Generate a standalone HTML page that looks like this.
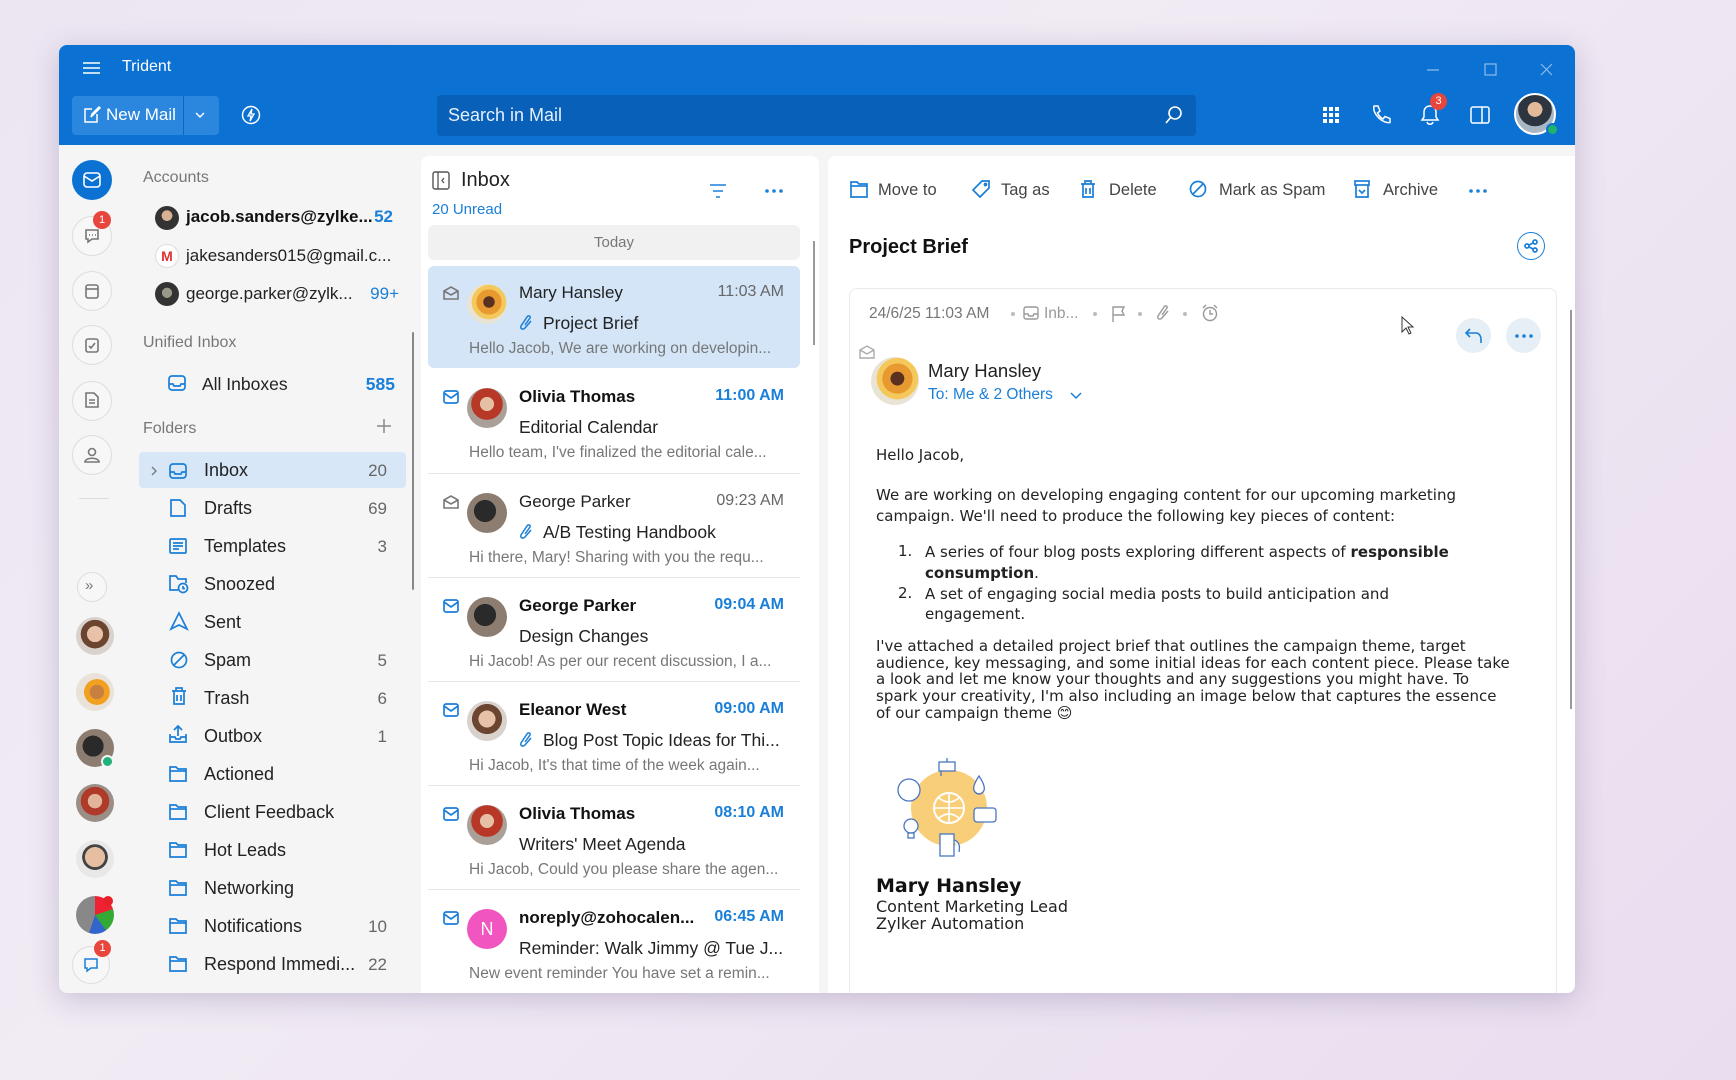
<!DOCTYPE html>
<html><head><meta charset="utf-8"><style>
*{box-sizing:border-box;margin:0;padding:0}
body{width:1736px;height:1080px;overflow:hidden;background:linear-gradient(135deg,#ece6f3 0%,#f1ebf4 40%,#e9ddef 100%);font-family:"Liberation Sans",sans-serif;position:relative}
.a{position:absolute}
.win{left:59px;top:45px;width:1516px;height:948px;background:#f5f5f5;border-radius:8px;overflow:hidden;box-shadow:0 6px 30px rgba(80,60,120,.25)}
.hdr{left:0;top:0;width:1516px;height:100px;background:#0b72d3}
.t{position:absolute;white-space:nowrap}
svg{position:absolute;overflow:visible}
.rail{fill:none;stroke:#777;stroke-width:1.6}
.circ{position:absolute;border-radius:50%;border:1.5px solid #ddd;background:#f7f7f7;width:40px;height:40px}
.fi{fill:none;stroke:#1a7fd8;stroke-width:1.7}
.fold{font-size:18px;color:#222}
.cnt{font-size:17px;color:#666;text-align:right;width:40px}
.av{position:absolute;border-radius:50%;overflow:hidden}
.item .nm{font-size:17px;color:#222}
.msg{font-size:15.5px;color:#777}
.body{font-family:"DejaVu Sans",sans-serif;font-size:15px;color:#222}
</style></head><body>
<div class="a win">
 <div class="a hdr"></div>
 <svg style="left:23px;top:16px" width="20" height="14"><path d="M1 2H18M1 7H18M1 12H18" stroke="#fff" stroke-width="1.6"/></svg>
 <div class="t" style="left:63px;top:13px;color:#fff;font-size:16px">Trident</div>
 <svg style="left:1368px;top:18px" width="180" height="14"><path d="M0 7H12" stroke="#8fbbe8" stroke-width="1.2"/><rect x="58" y="1" width="11" height="11" fill="none" stroke="#8fbbe8" stroke-width="1.2"/><path d="M114 1L125 12M125 1L114 12" stroke="#8fbbe8" stroke-width="1.2"/></svg>
 <div class="a" style="left:13px;top:51px;width:147px;height:39px;background:#2a87dd;border-radius:4px"></div>
 <div class="a" style="left:124px;top:51px;width:1px;height:39px;background:#0b68c2"></div>
 <svg style="left:24px;top:61px" width="18" height="18"><path d="M14 8V16H2V3H9M8 11L9 8 16 1 17 2 10 9Z" fill="none" stroke="#fff" stroke-width="1.5"/></svg>
 <div class="t" style="left:47px;top:60px;color:#fff;font-size:17px">New Mail</div>
 <svg style="left:136px;top:67px" width="10" height="6"><path d="M1 1L5 5 9 1" fill="none" stroke="#fff" stroke-width="1.4"/></svg>
 <svg style="left:182px;top:60px" width="20" height="20"><circle cx="10" cy="10" r="8.5" fill="none" stroke="#fff" stroke-width="1.5"/><path d="M11 4L7 11H10L9 16 13 9H10Z" fill="none" stroke="#fff" stroke-width="1.3"/></svg>
 <div class="a" style="left:378px;top:50px;width:759px;height:41px;background:#0860b8;border-radius:4px"></div>
 <div class="t" style="left:389px;top:60px;color:#e6f0fb;font-size:18px">Search in Mail</div>
 <svg style="left:1106px;top:61px" width="18" height="18"><circle cx="10" cy="7" r="6" fill="none" stroke="#fff" stroke-width="1.6"/><path d="M6 11L1 17" stroke="#fff" stroke-width="1.6"/></svg>
 <svg style="left:1264px;top:62px" width="16" height="16" fill="#fff"><rect x="0" y="0" width="4" height="4"/><rect x="6" y="0" width="4" height="4"/><rect x="12" y="0" width="4" height="4"/><rect x="0" y="6" width="4" height="4"/><rect x="6" y="6" width="4" height="4"/><rect x="12" y="6" width="4" height="4"/><rect x="0" y="12" width="4" height="4"/><rect x="6" y="12" width="4" height="4"/><rect x="12" y="12" width="4" height="4"/></svg>
 <svg style="left:1312px;top:60px" width="20" height="20"><path d="M3 1L7 1 9 6 6.5 8C8 11 9.5 12.5 12 14L14 11.5 19 13.5V17.5C12 19 1 9 3 1Z" fill="none" stroke="#fff" stroke-width="1.5"/></svg>
 <svg style="left:1361px;top:59px" width="20" height="22"><path d="M10 2C6 2 4 5 4 8V13L2 16H18L16 13V8C16 5 14 2 10 2ZM7 18C8 21 12 21 13 18" fill="none" stroke="#fff" stroke-width="1.5"/></svg>
 <div class="a" style="left:1371px;top:48px;width:17px;height:17px;border-radius:50%;background:#e8453c;color:#fff;font-size:11px;text-align:center;line-height:17px">3</div>
 <svg style="left:1411px;top:61px" width="20" height="18"><rect x="1" y="1" width="18" height="16" rx="2" fill="none" stroke="#fff" stroke-width="1.5"/><path d="M12 1V17" stroke="#fff" stroke-width="1.5"/></svg>
 <div class="av" style="left:1455px;top:48px;width:42px;height:42px;background:radial-gradient(circle at 50% 38%,#e3b99a 0 24%,#2d3540 25% 55%,#a9b6c4 56%);border:2px solid #fff"></div>
 <div class="a" style="left:1487px;top:78px;width:13px;height:13px;border-radius:50%;background:#21b26b;border:2px solid #0b72d3"></div>

 <div class="a" style="left:13px;top:115px;width:40px;height:40px;border-radius:50%;background:#0b72d3"></div>
 <svg style="left:24px;top:127px" width="18" height="16"><rect x="1" y="1" width="16" height="14" rx="3" fill="none" stroke="#fff" stroke-width="1.6"/><path d="M1 4L9 9 17 4" fill="none" stroke="#fff" stroke-width="1.6"/></svg>
 <div class="circ" style="left:13px;top:171px"></div><svg style="left:25px;top:183px" width="16" height="16" class="rail"><path d="M2 2H14V11H8L4 14V11H2Z"/><path d="M5 7H6M8 7H9M11 7H12"/></svg>
 <div class="a" style="left:34px;top:166px;width:18px;height:18px;border-radius:50%;background:#e8453c;color:#fff;font-size:11px;text-align:center;line-height:18px">1</div>
 <div class="circ" style="left:13px;top:226px"></div><svg style="left:25px;top:238px" width="16" height="16" class="rail"><rect x="2" y="2" width="12" height="13" rx="2"/><path d="M2 6H14"/></svg>
 <div class="circ" style="left:13px;top:280px"></div><svg style="left:26px;top:292px" width="14" height="16" class="rail"><rect x="1" y="2" width="12" height="13" rx="2"/><path d="M4 9L6 11 10 6"/></svg>
 <div class="circ" style="left:13px;top:336px"></div><svg style="left:26px;top:347px" width="14" height="16" class="rail"><path d="M1 1H9L13 5V15H1Z"/><path d="M4 8H10M4 11H10"/></svg>
 <div class="circ" style="left:13px;top:390px"></div><svg style="left:25px;top:402px" width="16" height="16" class="rail"><circle cx="8" cy="5" r="3.5"/><path d="M1 15C1 10 15 10 15 15Z"/></svg>
 <div class="a" style="left:20px;top:453px;width:30px;height:1px;background:#ddd"></div>
 <div class="circ" style="left:18px;top:527px;width:30px;height:30px"></div><div class="t" style="left:26px;top:532px;color:#777;font-size:15px">»</div>
 <div class="av" style="left:17px;top:572px;width:38px;height:38px;background:radial-gradient(circle at 50% 45%,#e8c2a8 0 28%,#6b4530 29% 50%,#d9d2cc 51%)"></div>
 <div class="av" style="left:17px;top:628px;width:38px;height:38px;background:radial-gradient(circle at 55% 50%,#c88040 0 25%,#f2a020 26% 45%,#e8e2d8 46%)"></div>
 <div class="av" style="left:17px;top:684px;width:38px;height:38px;background:radial-gradient(circle at 45% 45%,#2a2a2a 0 35%,#8c7d70 36%)"></div>
 <div class="a" style="left:42px;top:710px;width:13px;height:13px;border-radius:50%;background:#1fb27a;border:2px solid #f5f5f5"></div>
 <div class="av" style="left:17px;top:739px;width:38px;height:38px;background:radial-gradient(circle at 50% 45%,#e2b49a 0 25%,#b03a2a 26% 50%,#9a8e86 51%)"></div>
 <div class="av" style="left:17px;top:795px;width:38px;height:38px;background:radial-gradient(circle at 50% 45%,#e6bfa2 0 35%,#444 36% 45%,#e8e8e8 46%)"></div>
 <div class="av" style="left:17px;top:851px;width:38px;height:38px;background:conic-gradient(#e23 0 20%,#3a3 20% 40%,#36c 40% 55%,#888 55%)"></div>
 <div class="a" style="left:44px;top:851px;width:10px;height:10px;border-radius:50%;background:#e8202a"></div>
 <div class="circ" style="left:13px;top:901px;width:38px;height:38px"></div><svg style="left:24px;top:912px" width="16" height="16"><path d="M2 2H14V11H8L4 14V11H2Z" fill="none" stroke="#1a7fd8" stroke-width="1.5"/></svg>
 <div class="a" style="left:35px;top:895px;width:17px;height:17px;border-radius:50%;background:#e8453c;color:#fff;font-size:11px;text-align:center;line-height:17px">1</div>

 <div class="t" style="left:84px;top:124px;font-size:16px;color:#777">Accounts</div>
 <div class="av" style="left:96px;top:161px;width:24px;height:24px;background:radial-gradient(circle at 50% 40%,#d8b094 0 28%,#333 29%)"></div>
 <div class="t" style="left:127px;top:162px;font-size:17px;color:#111;font-weight:bold">jacob.sanders@zylke...</div>
 <div class="t" style="left:314px;top:162px;font-size:17px;color:#1a7fd8;font-weight:bold;width:20px;text-align:right">52</div>
 <div class="av" style="left:96px;top:199px;width:24px;height:24px;background:#fff;border:1px solid #ddd;color:#d33;font-weight:bold;font-size:14px;text-align:center;line-height:22px">M</div>
 <div class="t" style="left:127px;top:201px;font-size:17px;color:#222">jakesanders015@gmail.c...</div>
 <div class="av" style="left:96px;top:237px;width:24px;height:24px;background:radial-gradient(circle at 50% 45%,#998 0 28%,#333 29%)"></div>
 <div class="t" style="left:127px;top:239px;font-size:17px;color:#222">george.parker@zylk...</div>
 <div class="t" style="left:304px;top:239px;font-size:17px;color:#1a7fd8;width:36px;text-align:right">99+</div>
 <div class="t" style="left:84px;top:289px;font-size:16px;color:#777">Unified Inbox</div>
 <svg style="left:109px;top:330px" width="18" height="16" class="fi"><rect x="1" y="1" width="16" height="14" rx="3"/><path d="M1 9H5L6 11H12L13 9H17"/></svg>
 <div class="t" style="left:143px;top:329px;font-size:17.5px;color:#222">All Inboxes</div>
 <div class="t" style="left:296px;top:329px;font-size:17.5px;color:#1a7fd8;font-weight:bold;width:40px;text-align:right">585</div>
 <div class="t" style="left:84px;top:375px;font-size:16px;color:#777">Folders</div>
 <svg style="left:318px;top:374px" width="14" height="14"><path d="M7 0V14M0 7H14" stroke="#888" stroke-width="1.5"/></svg>
 <div class="a" style="left:80px;top:407px;width:267px;height:36px;background:#d7e7f7;border-radius:4px"></div>
 <svg style="left:92px;top:421px" width="6" height="10"><path d="M1 1L5 5 1 9" fill="none" stroke="#777" stroke-width="1.3"/></svg>
 <svg style="left:110px;top:418px" width="18" height="16" class="fi"><rect x="1" y="1" width="16" height="14" rx="3"/><path d="M1 9H5L6 11H12L13 9H17"/></svg>
 <div class="t fold" style="left:145px;top:415px">Inbox</div><div class="t cnt" style="left:288px;top:416px">20</div>
 <svg style="left:111px;top:454px" width="16" height="18" class="fi"><path d="M1 1H10L15 6V17H1Z"/></svg>
 <div class="t fold" style="left:145px;top:453px">Drafts</div><div class="t cnt" style="left:288px;top:454px">69</div>
 <svg style="left:110px;top:493px" width="18" height="16" class="fi"><rect x="1" y="1" width="16" height="14" rx="1"/><path d="M4 5H14M4 8H14M4 11H10"/></svg>
 <div class="t fold" style="left:145px;top:491px">Templates</div><div class="t cnt" style="left:288px;top:492px">3</div>
 <svg style="left:110px;top:530px" width="20" height="18" class="fi"><path d="M9 15H1V1H7L9 4H17V8"/><circle cx="14" cy="13" r="4.5"/><path d="M14 11V13.5H16"/></svg>
 <div class="t fold" style="left:145px;top:529px">Snoozed</div>
 <svg style="left:111px;top:567px" width="18" height="18" class="fi"><path d="M9 1L17 17 9 13 1 17Z"/></svg>
 <div class="t fold" style="left:145px;top:567px">Sent</div>
 <svg style="left:111px;top:606px" width="18" height="18" class="fi"><circle cx="9" cy="9" r="7.5"/><path d="M4 14L14 4"/></svg>
 <div class="t fold" style="left:145px;top:605px">Spam</div><div class="t cnt" style="left:288px;top:606px">5</div>
 <svg style="left:112px;top:642px" width="16" height="19" class="fi"><path d="M1 4H15M5 4V1H11V4M3 4V17H13V4M6 8V14M10 8V14"/></svg>
 <div class="t fold" style="left:145px;top:643px">Trash</div><div class="t cnt" style="left:288px;top:644px">6</div>
 <svg style="left:110px;top:680px" width="18" height="18" class="fi"><path d="M9 11V1M5 5L9 1 13 5M1 9V17H17V9M1 12H6L7 14H11L12 12H17"/></svg>
 <div class="t fold" style="left:145px;top:681px">Outbox</div><div class="t cnt" style="left:288px;top:682px">1</div>
 <svg style="left:110px;top:721px" width="18" height="16" class="fi"><path d="M1 1H7L9 3H17V15H1Z"/><path d="M1 5H17"/></svg>
 <div class="t fold" style="left:145px;top:719px">Actioned</div>
 <svg style="left:110px;top:759px" width="18" height="16" class="fi"><path d="M1 1H7L9 3H17V15H1Z"/><path d="M1 5H17"/></svg>
 <div class="t fold" style="left:145px;top:757px">Client Feedback</div>
 <svg style="left:110px;top:797px" width="18" height="16" class="fi"><path d="M1 1H7L9 3H17V15H1Z"/><path d="M1 5H17"/></svg>
 <div class="t fold" style="left:145px;top:795px">Hot Leads</div>
 <svg style="left:110px;top:835px" width="18" height="16" class="fi"><path d="M1 1H7L9 3H17V15H1Z"/><path d="M1 5H17"/></svg>
 <div class="t fold" style="left:145px;top:833px">Networking</div>
 <svg style="left:110px;top:873px" width="18" height="16" class="fi"><path d="M1 1H7L9 3H17V15H1Z"/><path d="M1 5H17"/></svg>
 <div class="t fold" style="left:145px;top:871px">Notifications</div><div class="t cnt" style="left:288px;top:872px">10</div>
 <svg style="left:110px;top:911px" width="18" height="16" class="fi"><path d="M1 1H7L9 3H17V15H1Z"/><path d="M1 5H17"/></svg>
 <div class="t fold" style="left:145px;top:909px">Respond Immedi...</div><div class="t cnt" style="left:288px;top:910px">22</div>
 <div class="a" style="left:353px;top:287px;width:2px;height:258px;background:#888;border-radius:1px"></div>

 <div class="a" style="left:362px;top:111px;width:398px;height:850px;background:#fff;border-radius:8px"></div>
 <svg style="left:373px;top:126px" width="18" height="19"><rect x="1" y="1" width="16" height="17" rx="2" fill="none" stroke="#555" stroke-width="1.4"/><path d="M6 1V18M12 7L10 9.5 12 12" fill="none" stroke="#555" stroke-width="1.3"/></svg>
 <div class="t" style="left:402px;top:124px;font-size:20px;color:#222">Inbox</div>
 <div class="t" style="left:373px;top:156px;font-size:15px;color:#1a7fd8">20 Unread</div>
 <svg style="left:650px;top:139px" width="18" height="14"><path d="M1 1H17M4 7H14M7 13H11" stroke="#1a7fd8" stroke-width="1.6"/></svg>
 <svg style="left:706px;top:144px" width="18" height="4" fill="#1a7fd8"><circle cx="2" cy="2" r="1.8"/><circle cx="9" cy="2" r="1.8"/><circle cx="16" cy="2" r="1.8"/></svg>
 <div class="a" style="left:369px;top:180px;width:372px;height:35px;background:#f1f1f1;border-radius:6px"></div>
 <div class="t" style="left:369px;top:189px;width:372px;text-align:center;font-size:15px;color:#777">Today</div>
 <div class="a" style="left:369px;top:221px;width:372px;height:102px;background:#d3e5f7;border-radius:6px"></div>
 <div class="a" style="left:754px;top:196px;width:2px;height:104px;background:#999"></div>

 <div class="a item" style="left:369px;top:221px;width:372px;height:103px">
  <svg style="left:15px;top:20px" width="16" height="14" class="rail" ><path d="M1 5L8 1 15 5V13H1ZM1 5L8 9 15 5"/></svg>
  <div class="av" style="left:39px;top:18px;width:40px;height:40px;background:radial-gradient(circle at 55% 45%,#5a3020 0 18%,#e89a30 19% 40%,#f4c85a 41% 55%,#e9e3d5 56%)"></div>
  <div class="t nm" style="left:91px;top:17px">Mary Hansley</div>
  <div class="t" style="right:16px;top:17px;font-size:16px;color:#666">11:03 AM</div>
  <svg style="left:91px;top:48px" width="14" height="18"><path d="M12 7L6 14C4 16 1 15 2 12L8 3C9 1 12 2 11 4L6 11" fill="none" stroke="#1a7fd8" stroke-width="1.5"/></svg>
  <div class="t" style="left:115px;top:47px;font-size:17.5px;color:#222">Project Brief</div>
  <div class="t msg" style="left:41px;top:74px">Hello Jacob, We are working on developin...</div>
 </div>

 <div class="a item" style="left:369px;top:325px;width:372px;height:104px;border-bottom:1.5px solid #e6e6e6">
  <svg style="left:15px;top:20px" width="16" height="14" class="fi"><rect x="1" y="1" width="14" height="12" rx="2"/><path d="M1 3L8 8 15 3"/></svg>
  <div class="av" style="left:39px;top:18px;width:40px;height:40px;background:radial-gradient(circle at 50% 40%,#e5c0a5 0 22%,#b83828 23% 50%,#aaa098 51%)"></div>
  <div class="t nm" style="left:91px;top:17px;font-weight:bold;color:#111">Olivia Thomas</div>
  <div class="t" style="right:16px;top:17px;font-size:16px;color:#1a7fd8;font-weight:bold">11:00 AM</div>
  <div class="t" style="left:91px;top:47px;font-size:17.5px;color:#222">Editorial Calendar</div>
  <div class="t msg" style="left:41px;top:74px">Hello team, I've finalized the editorial cale...</div>
 </div>

 <div class="a item" style="left:369px;top:430px;width:372px;height:103px;border-bottom:1.5px solid #e6e6e6">
  <svg style="left:15px;top:20px" width="16" height="14" class="rail"><path d="M1 5L8 1 15 5V13H1ZM1 5L8 9 15 5"/></svg>
  <div class="av" style="left:39px;top:18px;width:40px;height:40px;background:radial-gradient(circle at 45% 45%,#2a2a2a 0 35%,#8c7d70 36%)"></div>
  <div class="t nm" style="left:91px;top:17px">George Parker</div>
  <div class="t" style="right:16px;top:17px;font-size:16px;color:#666">09:23 AM</div>
  <svg style="left:91px;top:48px" width="14" height="18"><path d="M12 7L6 14C4 16 1 15 2 12L8 3C9 1 12 2 11 4L6 11" fill="none" stroke="#1a7fd8" stroke-width="1.5"/></svg>
  <div class="t" style="left:115px;top:47px;font-size:17.5px;color:#222">A/B Testing Handbook</div>
  <div class="t msg" style="left:41px;top:74px">Hi there, Mary! Sharing with you the requ...</div>
 </div>

 <div class="a item" style="left:369px;top:534px;width:372px;height:103px;border-bottom:1.5px solid #e6e6e6">
  <svg style="left:15px;top:20px" width="16" height="14" class="fi"><rect x="1" y="1" width="14" height="12" rx="2"/><path d="M1 3L8 8 15 3"/></svg>
  <div class="av" style="left:39px;top:18px;width:40px;height:40px;background:radial-gradient(circle at 45% 45%,#2a2a2a 0 35%,#8c7d70 36%)"></div>
  <div class="t nm" style="left:91px;top:17px;font-weight:bold;color:#111">George Parker</div>
  <div class="t" style="right:16px;top:17px;font-size:16px;color:#1a7fd8;font-weight:bold">09:04 AM</div>
  <div class="t" style="left:91px;top:47px;font-size:17.5px;color:#222">Design Changes</div>
  <div class="t msg" style="left:41px;top:74px">Hi Jacob! As per our recent discussion, I a...</div>
 </div>

 <div class="a item" style="left:369px;top:638px;width:372px;height:103px;border-bottom:1.5px solid #e6e6e6">
  <svg style="left:15px;top:20px" width="16" height="14" class="fi"><rect x="1" y="1" width="14" height="12" rx="2"/><path d="M1 3L8 8 15 3"/></svg>
  <div class="av" style="left:39px;top:18px;width:40px;height:40px;background:radial-gradient(circle at 50% 45%,#e8c2a8 0 28%,#6b4530 29% 50%,#d9d2cc 51%)"></div>
  <div class="t nm" style="left:91px;top:17px;font-weight:bold;color:#111">Eleanor West</div>
  <div class="t" style="right:16px;top:17px;font-size:16px;color:#1a7fd8;font-weight:bold">09:00 AM</div>
  <svg style="left:91px;top:48px" width="14" height="18"><path d="M12 7L6 14C4 16 1 15 2 12L8 3C9 1 12 2 11 4L6 11" fill="none" stroke="#1a7fd8" stroke-width="1.5"/></svg>
  <div class="t" style="left:115px;top:47px;font-size:17.5px;color:#222">Blog Post Topic Ideas for Thi...</div>
  <div class="t msg" style="left:41px;top:74px">Hi Jacob, It's that time of the week again...</div>
 </div>

 <div class="a item" style="left:369px;top:742px;width:372px;height:103px;border-bottom:1.5px solid #e6e6e6">
  <svg style="left:15px;top:20px" width="16" height="14" class="fi"><rect x="1" y="1" width="14" height="12" rx="2"/><path d="M1 3L8 8 15 3"/></svg>
  <div class="av" style="left:39px;top:18px;width:40px;height:40px;background:radial-gradient(circle at 50% 40%,#e5c0a5 0 22%,#b83828 23% 50%,#aaa098 51%)"></div>
  <div class="t nm" style="left:91px;top:17px;font-weight:bold;color:#111">Olivia Thomas</div>
  <div class="t" style="right:16px;top:17px;font-size:16px;color:#1a7fd8;font-weight:bold">08:10 AM</div>
  <div class="t" style="left:91px;top:47px;font-size:17.5px;color:#222">Writers' Meet Agenda</div>
  <div class="t msg" style="left:41px;top:74px">Hi Jacob, Could you please share the agen...</div>
 </div>

 <div class="a item" style="left:369px;top:846px;width:372px;height:103px">
  <svg style="left:15px;top:20px" width="16" height="14" class="fi"><rect x="1" y="1" width="14" height="12" rx="2"/><path d="M1 3L8 8 15 3"/></svg>
  <div class="av" style="left:39px;top:18px;width:40px;height:40px;background:#f055c0;color:#fff;font-size:18px;text-align:center;line-height:40px">N</div>
  <div class="t nm" style="left:91px;top:17px;font-weight:bold;color:#111">noreply@zohocalen...</div>
  <div class="t" style="right:16px;top:17px;font-size:16px;color:#1a7fd8;font-weight:bold">06:45 AM</div>
  <div class="t" style="left:91px;top:47px;font-size:17.5px;color:#222">Reminder: Walk Jimmy @ Tue J...</div>
  <div class="t msg" style="left:41px;top:74px">New event reminder You have set a remin...</div>
 </div>

 <div class="a" style="left:769px;top:111px;width:747px;height:850px;background:#fff;border-radius:8px 0 0 0"></div>
 <svg style="left:791px;top:136px" width="18" height="17" class="fi"><path d="M1 1H7L9 3H17V16H1Z"/><path d="M1 5H17"/></svg>
 <div class="t" style="left:819px;top:136px;font-size:16.5px;color:#444">Move to</div>
 <svg style="left:913px;top:135px" width="18" height="19" class="fi"><path d="M10 1H17V8L8 17 1 10Z"/><circle cx="13.5" cy="4.5" r="1"/></svg>
 <div class="t" style="left:942px;top:136px;font-size:16.5px;color:#444">Tag as</div>
 <svg style="left:1021px;top:135px" width="16" height="19" class="fi"><path d="M1 4H15M5 4V1H11V4M3 4V17H13V4M6 8V14M10 8V14"/></svg>
 <div class="t" style="left:1050px;top:136px;font-size:16.5px;color:#444">Delete</div>
 <svg style="left:1130px;top:135px" width="18" height="18" class="fi"><circle cx="9" cy="9" r="7.5"/><path d="M4 14L14 4"/></svg>
 <div class="t" style="left:1160px;top:136px;font-size:16.5px;color:#444">Mark as Spam</div>
 <svg style="left:1295px;top:135px" width="16" height="19" class="fi"><rect x="1" y="1" width="14" height="4"/><path d="M2 5V17H14V5M5 10L8 13 11 10"/></svg>
 <div class="t" style="left:1324px;top:136px;font-size:16.5px;color:#444">Archive</div>
 <svg style="left:1410px;top:144px" width="18" height="4" fill="#1a7fd8"><circle cx="2" cy="2" r="1.8"/><circle cx="9" cy="2" r="1.8"/><circle cx="16" cy="2" r="1.8"/></svg>
 <div class="t" style="left:790px;top:191px;font-size:20px;font-weight:bold;color:#111">Project Brief</div>
 <div class="a" style="left:1458px;top:187px;width:28px;height:28px;border-radius:50%;border:1.5px solid #1a7fd8"></div>
 <svg style="left:1465px;top:194px" width="14" height="14" class="fi"><circle cx="11" cy="3" r="2"/><circle cx="3" cy="7" r="2"/><circle cx="11" cy="11" r="2"/><path d="M5 6L9 4M5 8L9 10"/></svg>
 <div class="a" style="left:790px;top:243px;width:708px;height:720px;border:1.5px solid #eaeaea;border-radius:8px"></div>
 <div class="t" style="left:810px;top:260px;font-size:15.5px;color:#777">24/6/25 11:03 AM</div>
 <div class="a" style="left:952px;top:267px;width:4px;height:4px;border-radius:50%;background:#bbb"></div>
 <svg style="left:964px;top:261px" width="16" height="14"><rect x="1" y="1" width="14" height="12" rx="2" stroke="#999" fill="none" stroke-width="1.4"/><path d="M1 8H5L6 10H10L11 8H15" stroke="#999" fill="none" stroke-width="1.4"/></svg>
 <div class="t" style="left:985px;top:260px;font-size:15.5px;color:#999">Inb...</div>
 <div class="a" style="left:1034px;top:267px;width:4px;height:4px;border-radius:50%;background:#bbb"></div>
 <svg style="left:1053px;top:261px" width="14" height="16"><path d="M1 16V1H12L10 5 12 9H1" fill="none" stroke="#999" stroke-width="1.4"/></svg>
 <div class="a" style="left:1079px;top:267px;width:4px;height:4px;border-radius:50%;background:#bbb"></div>
 <svg style="left:1097px;top:259px" width="14" height="18"><path d="M12 7L6 14C4 16 1 15 2 12L8 3C9 1 12 2 11 4L6 11" fill="none" stroke="#999" stroke-width="1.4"/></svg>
 <div class="a" style="left:1124px;top:267px;width:4px;height:4px;border-radius:50%;background:#bbb"></div>
 <svg style="left:1142px;top:259px" width="18" height="18"><circle cx="9" cy="10" r="6.5" fill="none" stroke="#999" stroke-width="1.4"/><path d="M9 6V10H12M2 4L5 1M16 4L13 1" fill="none" stroke="#999" stroke-width="1.4"/></svg>
 <svg style="left:1342px;top:271px" width="14" height="20"><path d="M1 1V16L5 12 8 18 10 17 7 11H12Z" fill="#fff" stroke="#333" stroke-width="1"/></svg>
 <div class="a" style="left:1397px;top:273px;width:35px;height:35px;border-radius:50%;background:#e6eef6"></div>
 <svg style="left:1406px;top:283px" width="18" height="16"><path d="M5 1L1 5 5 9M1 5H11C14 5 16 8 16 11V15" fill="none" stroke="#1a7fd8" stroke-width="1.6"/></svg>
 <div class="a" style="left:1447px;top:273px;width:35px;height:35px;border-radius:50%;background:#e6eef6"></div>
 <svg style="left:1456px;top:289px" width="18" height="4" fill="#1a7fd8"><circle cx="2" cy="2" r="1.8"/><circle cx="9" cy="2" r="1.8"/><circle cx="16" cy="2" r="1.8"/></svg>
 <svg style="left:800px;top:300px" width="16" height="14"><path d="M1 5L8 1 15 5V13H1ZM1 5L8 9 15 5" stroke="#aaa" fill="none" stroke-width="1.4"/></svg>
 <div class="av" style="left:812px;top:312px;width:48px;height:48px;background:radial-gradient(circle at 55% 45%,#5a3020 0 18%,#e89a30 19% 40%,#f4c85a 41% 55%,#e9e3d5 56%)"></div>
 <div class="t" style="left:869px;top:315px;font-size:18.5px;color:#222">Mary Hansley</div>
 <div class="t" style="left:869px;top:341px;font-size:15.5px;color:#1a7fd8">To: Me &amp; 2 Others</div>
 <svg style="left:1011px;top:347px" width="12" height="8"><path d="M1 1L6 6 11 1" fill="none" stroke="#1a7fd8" stroke-width="1.5"/></svg>

 <div class="t body" style="left:817px;top:401px">Hello Jacob,</div>
 <div class="a body" style="left:817px;top:440px;width:660px;line-height:21px">We are working on developing engaging content for our upcoming marketing campaign. We'll need to produce the following key pieces of content:</div>
 <div class="t body" style="left:839px;top:497px">1.</div>
 <div class="a body" style="left:866px;top:497px;width:620px;line-height:21px">A series of four blog posts exploring different aspects of <b>responsible consumption</b>.</div>
 <div class="t body" style="left:839px;top:539px">2.</div>
 <div class="a body" style="left:866px;top:539px;width:540px;line-height:20px">A set of engaging social media posts to build anticipation and engagement.</div>
 <div class="a body" style="left:817px;top:593px;width:635px;line-height:16.7px">I've attached a detailed project brief that outlines the campaign theme, target audience, key messaging, and some initial ideas for each content piece. Please take a look and let me know your thoughts and any suggestions you might have. To spark your creativity, I'm also including an image below that captures the essence of our campaign theme 😊</div>
 <svg style="left:832px;top:711px" width="120" height="106">
  <circle cx="58" cy="52" r="38" fill="#f8cf78"/>
  <g fill="#fff" stroke="#4a76c0" stroke-width="1.3">
   <circle cx="58" cy="52" r="15" fill="none" stroke="#fff" stroke-width="2"/>
   <path d="M43 52H73M58 37V67M48 42Q58 50 68 42M48 62Q58 54 68 62" fill="none" stroke="#fff" stroke-width="1.6"/>
   <rect x="48" y="6" width="16" height="9"/><path d="M56 2V6M50 15V20"/>
   <path d="M88 20Q80 32 84 36Q88 40 92 36Q96 32 88 20Z"/>
   <circle cx="18" cy="34" r="11"/>
   <rect x="83" y="52" width="22" height="14" rx="3"/>
   <circle cx="20" cy="70" r="7"/><rect x="17" y="77" width="6" height="5"/>
   <rect x="49" y="78" width="14" height="22"/><path d="M63 84Q70 86 68 96"/>
  </g>
 </svg>
 <div class="t body" style="left:817px;top:830px;font-size:19px;font-weight:bold;color:#111">Mary Hansley</div>
 <div class="t body" style="left:817px;top:853px;font-size:16px;line-height:17px">Content Marketing Lead<br>Zylker Automation</div>
 <div class="a" style="left:1511px;top:265px;width:2px;height:399px;background:#999"></div>
</div>
</body></html>
